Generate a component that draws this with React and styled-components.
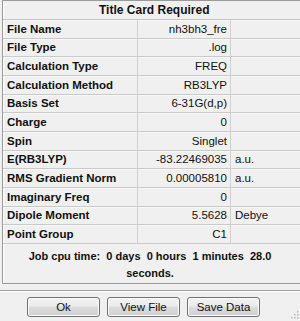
import styled, { createGlobalStyle } from "styled-components"

const Global = createGlobalStyle`
  html, body { margin:0; padding:0; background:#f0f0f0; }
  body { font-family:"Liberation Sans", Arial, sans-serif; }
`

const Window = styled.div`
  width:300px;
  height:321px;
  overflow:hidden;
  background:#f0f0f0;
  position:relative;
  color:#111;
`
const Frame = styled.div`
  margin-left:2px;
  width:310px;
  height:282px;
  border-top:1px solid #9a9a9a;
  border-left:1px solid #9a9a9a;
  border-bottom:1px solid #9a9a9a;
  box-shadow:inset 1px 0 0 #fff;
  display:flex;
  flex-direction:column;
`
const TitleRow = styled.div`
  height:18px;
  border-bottom:1px solid #c4c4c4;
  font-weight:bold;
  font-size:12px;
  display:flex;
  align-items:center;
  padding-left:96px;
`
const Table = styled.div`
  display:grid;
  grid-template-columns:135px 93px 1fr;
  grid-template-rows:repeat(12, 18.67px);
`
const Cell = styled.div`
  display:flex;
  align-items:center;
  font-size:11.5px;
  border-bottom:1px solid #cacaca;
  border-right:${p => p.$last ? "none" : "1px solid #d0d0d0"};
  box-shadow:inset 0 1px 0 #f8f8f8;
  justify-content:${p => p.$right ? "flex-end" : "flex-start"};
  font-weight:${p => p.$bold ? "bold" : "normal"};
  padding:${p => p.$right ? "0 3px 0 0" : "0 0 0 4px"};
  white-space:nowrap;
`
const JobTime = styled.div`
  flex:1;
  font-weight:bold;
  font-size:11px;
  white-space:pre-wrap;
  text-align:center;
  width:260px;
  padding:4px 0 0 17px;
  line-height:17px;
`
const Separator = styled.div`
  margin-top:6px;
  height:1px;
  background:#a0a0a0;
  border-bottom:1px solid #fff;
`
const Buttons = styled.div`
  display:flex;
  gap:7px;
  padding:5px 0 0 27px;
`
const Button = styled.button`
  width:73px;
  height:20px;
  border:1px solid #707070;
  border-radius:3px;
  background:linear-gradient(#f2f2f2 0%, #ebebeb 45%, #dddddd 50%, #cfcfcf 100%);
  box-shadow:inset 0 0 0 1px #fcfcfc;
  font-family:"Liberation Sans", Arial, sans-serif;
  font-size:11.5px;
  color:#111;
  padding:0;
`
const Grip = styled.svg`
  position:absolute;
  right:1px;
  bottom:1px;
`

const rows = [
  ["File Name", "nh3bh3_fre", ""],
  ["File Type", ".log", ""],
  ["Calculation Type", "FREQ", ""],
  ["Calculation Method", "RB3LYP", ""],
  ["Basis Set", "6-31G(d,p)", ""],
  ["Charge", "0", ""],
  ["Spin", "Singlet", ""],
  ["E(RB3LYP)", "-83.22469035", "a.u."],
  ["RMS Gradient Norm", "0.00005810", "a.u."],
  ["Imaginary Freq", "0", ""],
  ["Dipole Moment", "5.5628", "Debye"],
  ["Point Group", "C1", ""],
]

const App = () => {
  return (
    <Window>
      <Global />
      <Frame>
        <TitleRow>Title Card Required</TitleRow>
        <Table>
          {rows.map(([label, value, unit]) => [
            <Cell key={label} $bold>{label}</Cell>,
            <Cell key={label + "v"} $right>{value}</Cell>,
            <Cell key={label + "u"} $last>{unit}</Cell>,
          ])}
        </Table>
        <JobTime>{"Job cpu time:  0 days  0 hours  1 minutes  28.0 seconds."}</JobTime>
      </Frame>
      <Separator />
      <Buttons>
        <Button>Ok</Button>
        <Button>View File</Button>
        <Button>Save Data</Button>
      </Buttons>
      <Grip width="10" height="10" viewBox="0 0 10 10">
        {[[8, 0], [8, 3], [5, 3], [8, 6], [5, 6], [2, 6]].map(([x, y]) => (
          <rect key={x + "-" + y} x={x} y={y + 1} width="1.5" height="1.5" fill="#b8b8b8" />
        ))}
      </Grip>
    </Window>
  )
}

export default App
